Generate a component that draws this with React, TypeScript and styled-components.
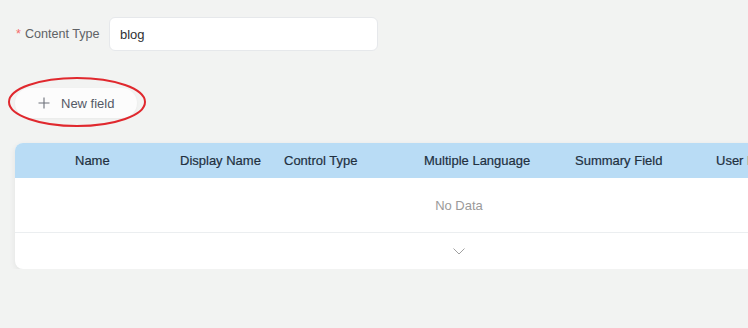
import React from 'react';
import styled, { createGlobalStyle } from 'styled-components';

const GlobalStyle = createGlobalStyle`
  html, body {
    margin: 0;
    padding: 0;
    background: #f2f3f2;
    overflow: hidden;
    font-family: "Liberation Sans", Arial, sans-serif;
  }
`;

const Page = styled.div`
  padding: 17px 0 0 15px;
  width: 888px;
`;

const FormRow = styled.div`
  display: flex;
  align-items: center;
  height: 34px;
`;

const Label = styled.label`
  width: 93px;
  font-size: 12.6px;
  color: #606266;
  padding-left: 1px;
`;

const Star = styled.span`
  color: #f56c6c;
  margin-right: 4px;
`;

const Input = styled.div`
  width: 257px;
  height: 32px;
  box-sizing: content-box;
  display: flex;
  align-items: center;
  padding-left: 10px;
  background: #fff;
  border: 1px solid #e6e8eb;
  border-radius: 6px;
  font-size: 13px;
  color: #303133;
`;

const ActionRow = styled.div`
  position: relative;
  margin-top: 37px;
  height: 30px;
`;

const AddButton = styled.button`
  display: flex;
  align-items: center;
  gap: 11px;
  height: 30px;
  width: 122px;
  padding: 0 0 0 23px;
  border: none;
  border-radius: 15px;
  background: #fcfcfc;
  box-shadow: 0 1px 3px rgba(0, 0, 0, 0.04);
  font-family: inherit;
  font-size: 13px;
  color: #555a66;
  cursor: pointer;
`;

const Highlight = styled.svg`
  position: absolute;
  left: -8px;
  top: -12px;
  pointer-events: none;
`;

const Card = styled.div`
  margin-top: 25px;
  background: #fff;
  border-radius: 8px;
  box-shadow: 0 2px 6px rgba(0, 0, 0, 0.07);
  overflow: hidden;
`;

const HeaderRow = styled.div`
  display: grid;
  grid-template-columns: 105px 104px 140px 151px 141px 1fr;
  align-items: center;
  height: 35px;
  padding-left: 60px;
  background: #b9dcf5;
`;

const HeaderCell = styled.div`
  font-size: 13px;
  color: #22303f;
  white-space: nowrap;
  -webkit-text-stroke: 0.2px #22303f;
`;

const Empty = styled.div`
  height: 54px;
  display: flex;
  align-items: center;
  justify-content: center;
  font-size: 13px;
  color: #9a9a9a;
  border-bottom: 1px solid #ebeef0;
`;

const Footer = styled.div`
  height: 36px;
  display: flex;
  align-items: center;
  justify-content: center;
  color: #9a9a9a;
`;

const columns = [
  'Name',
  'Display Name',
  'Control Type',
  'Multiple Language',
  'Summary Field',
  'User Editable',
];

export default function App() {
  return (
    <>
      <GlobalStyle />
      <Page>
        <FormRow>
          <Label>
            <Star>*</Star>Content Type
          </Label>
          <Input>blog</Input>
        </FormRow>

        <ActionRow>
          <AddButton>
            <svg width="12" height="12" viewBox="0 0 12 12">
              <path d="M6 0.5v11M0.5 6h11" stroke="#6b6f78" strokeWidth="1.1" fill="none" />
            </svg>
            New field
          </AddButton>
          <Highlight width="140" height="52" viewBox="0 0 140 52">
            <ellipse cx="70" cy="26" rx="68" ry="24" fill="none" stroke="#e0282e" strokeWidth="2" />
          </Highlight>
        </ActionRow>

        <Card>
          <HeaderRow>
            {columns.map((c) => (
              <HeaderCell key={c}>{c}</HeaderCell>
            ))}
          </HeaderRow>
          <Empty>No Data</Empty>
          <Footer>
            <svg width="12" height="7" viewBox="0 0 12 7">
              <path d="M0.5 0.5L6 6L11.5 0.5" stroke="#a0a0a0" strokeWidth="1" fill="none" />
            </svg>
          </Footer>
        </Card>
      </Page>
    </>
  );
}
